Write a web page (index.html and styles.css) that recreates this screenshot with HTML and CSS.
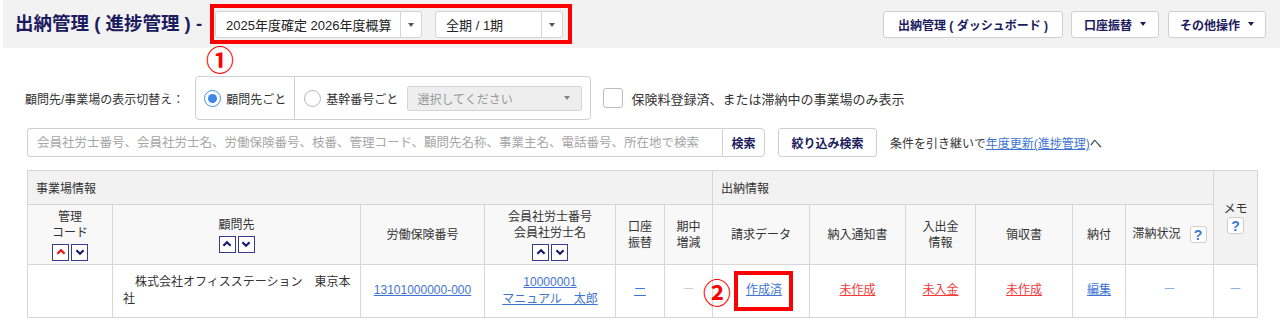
FILE: index.html
```html
<!DOCTYPE html>
<html lang="ja">
<head>
<meta charset="utf-8">
<title>出納管理 ( 進捗管理 )</title>
<link rel="stylesheet" href="styles.css">
</head>
<body>
<header class="topbar">
  <h1 class="page-title">出納管理 ( 進捗管理 ) -</h1>
  <div class="period">
    <div class="dd dd-year"><span class="dd-label">2025年度確定 2026年度概算</span><span class="dd-arrow"><i class="tri"></i></span></div>
    <div class="dd dd-term"><span class="dd-label">全期 / 1期</span><span class="dd-arrow"><i class="tri"></i></span></div>
    <span class="mark mark-1">①</span>
  </div>
  <nav class="actions">
    <button class="btn btn-dash">出納管理 ( ダッシュボード )</button>
    <button class="btn btn-acct">口座振替<i class="tri tri-navy"></i></button>
    <button class="btn btn-other">その他操作<i class="tri tri-navy"></i></button>
  </nav>
</header>

<main class="content">
  <div class="filter-row">
    <span class="filter-label">顧問先/事業場の表示切替え：</span>
    <div class="radio-group">
      <label class="opt opt-a"><span class="radio on"></span>顧問先ごと</label>
      <label class="opt opt-b"><span class="radio"></span>基幹番号ごと<span class="dd-disabled">選択してください<i class="tri tri-gray"></i></span></label>
    </div>
    <label class="check"><span class="box"></span>保険料登録済、または滞納中の事業場のみ表示</label>
  </div>

  <div class="search-row">
    <div class="search">
      <input class="search-input" type="text" placeholder="会員社労士番号、会員社労士名、労働保険番号、枝番、管理コード、顧問先名称、事業主名、電話番号、所在地で検索">
      <button class="search-btn">検索</button>
    </div>
    <button class="btn btn-filter">絞り込み検索</button>
    <p class="carry">条件を引き継いで<a href="#">年度更新(進捗管理)</a>へ</p>
  </div>

  <table class="grid">
    <colgroup>
      <col class="c-code"><col class="c-client"><col class="c-ins"><col class="c-member"><col class="c-acct"><col class="c-mid">
      <col class="c-bill"><col class="c-notice"><col class="c-pay"><col class="c-receipt"><col class="c-deliver"><col class="c-arrears"><col class="c-memo">
    </colgroup>
    <thead>
      <tr class="group-row">
        <th class="group" colspan="6">事業場情報</th>
        <th class="group" colspan="6">出納情報</th>
        <th class="memo-head" rowspan="2">メモ<br><span class="help">?</span></th>
      </tr>
      <tr class="col-row">
        <th>管理<br>コード<br><span class="sort"><span class="sort-btn active"><svg viewBox="0 0 10 10"><polyline points="2,6.5 5,3.5 8,6.5"/></svg></span><span class="sort-btn"><svg viewBox="0 0 10 10"><polyline points="2,3.5 5,6.5 8,3.5"/></svg></span></span></th>
        <th>顧問先<br><span class="sort"><span class="sort-btn"><svg viewBox="0 0 10 10"><polyline points="2,6.5 5,3.5 8,6.5"/></svg></span><span class="sort-btn"><svg viewBox="0 0 10 10"><polyline points="2,3.5 5,6.5 8,3.5"/></svg></span></span></th>
        <th>労働保険番号</th>
        <th>会員社労士番号<br>会員社労士名<br><span class="sort"><span class="sort-btn"><svg viewBox="0 0 10 10"><polyline points="2,6.5 5,3.5 8,6.5"/></svg></span><span class="sort-btn"><svg viewBox="0 0 10 10"><polyline points="2,3.5 5,6.5 8,3.5"/></svg></span></span></th>
        <th>口座<br>振替</th>
        <th>期中<br>増減</th>
        <th>請求データ</th>
        <th>納入通知書</th>
        <th>入出金<br>情報</th>
        <th>領収書</th>
        <th>納付</th>
        <th>滞納状況<span class="help help-inline">?</span></th>
      </tr>
    </thead>
    <tbody>
      <tr class="data-row">
        <td></td>
        <td class="client">　株式会社オフィスステーション　東京本<br>社</td>
        <td><a href="#">13101000000-000</a></td>
        <td><a href="#">10000001</a><br><a href="#">マニュアル　太郎</a></td>
        <td><a href="#">ー</a></td>
        <td><span class="dash-gray">ー</span></td>
        <td><span class="callout"><a href="#">作成済</a><span class="mark mark-2">②</span></span></td>
        <td><a class="warn" href="#">未作成</a></td>
        <td><a class="warn" href="#">未入金</a></td>
        <td><a class="warn" href="#">未作成</a></td>
        <td><a href="#">編集</a></td>
        <td><span class="dash-blue">ー</span></td>
        <td><span class="dash-blue">ー</span></td>
      </tr>
    </tbody>
  </table>
</main>
</body>
</html>
```

FILE: styles.css
```css
* { box-sizing: border-box; }

body {
  margin: 0;
  font-family: "Liberation Sans", "Noto Sans CJK JP", sans-serif;
  font-size: 12px;
  color: #333;
  background: #fff;
}

button {
  font-family: inherit;
  cursor: pointer;
}

/* ---------- top bar ---------- */
.topbar {
  display: flex;
  align-items: center;
  height: 48px;
  margin-left: 3px;
  padding: 0 14px 0 12px;
  background: #f2f2f2;
}

.page-title {
  margin: 0 8px 0 0;
  font-size: 18.5px;
  font-weight: bold;
  color: #1b1b5e;
  white-space: pre;
  line-height: 24px;
}

.period {
  position: relative;
  display: flex;
  gap: 13px;
  padding: 3px 5px 2px 1px;
  border: 4px solid #ff0000;
}

.dd {
  display: flex;
  height: 27px;
  background: #fff;
  border: 1px solid #d4d4d4;
  border-radius: 3px;
  font-size: 13px;
  color: #222;
}

.dd-year { width: 207px; }
.dd-term { width: 128px; }

.dd-label {
  flex: 1;
  display: flex;
  align-items: center;
  padding-left: 10px;
  white-space: nowrap;
}

.dd-arrow {
  width: 21px;
  display: flex;
  align-items: center;
  justify-content: center;
  border-left: 1px solid #d4d4d4;
}

.tri {
  display: inline-block;
  width: 0;
  height: 0;
  border-left: 3.5px solid transparent;
  border-right: 3.5px solid transparent;
  border-top: 4px solid #555;
}

.tri-navy {
  border-top-color: #1b1b5e;
  margin-left: 8px;
}

.tri-gray {
  border-top-color: #888;
}

.mark {
  position: absolute;
  font-family: "Noto Sans CJK JP", sans-serif;
  font-weight: bold;
  font-size: 28px;
  line-height: 28px;
  color: #ff0000;
}

.mark-1 {
  left: -8px;
  top: 37px;
}

.actions {
  display: flex;
  gap: 8px;
  margin-left: auto;
}

.btn {
  display: inline-flex;
  align-items: center;
  justify-content: center;
  height: 27px;
  padding: 0;
  background: #fff;
  border: 1px solid #cfcfcf;
  border-radius: 3px;
  font-size: 12px;
  font-weight: bold;
  color: #1b1b5e;
  white-space: nowrap;
}

.btn-dash { width: 180px; }
.btn-acct { width: 88px; }
.btn-other { width: 98px; margin-left: 1px; }

/* ---------- content ---------- */
.content {
  padding-left: 27px;
}

.filter-row {
  display: flex;
  align-items: center;
  margin: 28px 0 0 -2px;
}

.filter-label {
  margin-right: 11px;
}

.radio-group {
  display: flex;
  align-items: center;
  height: 44px;
  border: 1px solid #d0d0d0;
  border-radius: 4px;
}

.opt {
  display: flex;
  align-items: center;
  height: 100%;
}

.opt-a {
  padding: 0 8px 0 8px;
}

.opt-b {
  padding: 0 8px 0 9px;
  border-left: 1px solid #d0d0d0;
}

.radio {
  position: relative;
  width: 17px;
  height: 17px;
  margin-right: 5px;
  border: 1px solid #b5b5b5;
  border-radius: 50%;
  background: #fff;
}

.radio.on {
  border-color: #4a8ae6;
}

.radio.on::after {
  content: "";
  position: absolute;
  left: 3px;
  top: 3px;
  width: 9px;
  height: 9px;
  border-radius: 50%;
  background: #3f86e8;
}

.dd-disabled {
  display: flex;
  align-items: center;
  justify-content: space-between;
  width: 175px;
  height: 25px;
  margin-left: 9px;
  padding: 0 11px 0 9px;
  background: #eeeeee;
  border: 1px solid #d4d4d4;
  border-radius: 2px;
  color: #999;
}

.check {
  display: flex;
  align-items: center;
  margin-left: 12px;
  font-size: 13px;
}

.box {
  width: 20px;
  height: 20px;
  margin-right: 8px;
  border: 1px solid #bcbcbc;
  border-radius: 3px;
  background: #fff;
}

.search-row {
  display: flex;
  align-items: center;
  margin-top: 8px;
}

.search {
  display: flex;
  height: 29px;
}

.search-input {
  width: 695px;
  height: 100%;
  padding: 0 9px;
  border: 1px solid #d0d0d0;
  border-right: none;
  border-radius: 4px 0 0 4px;
  font-family: inherit;
  font-size: 12.5px;
  color: #333;
  outline: none;
}

.search-input::placeholder {
  color: #a6a6a6;
}

.search-btn {
  width: 43px;
  height: 100%;
  padding: 0;
  background: #fff;
  border: 1px solid #d0d0d0;
  border-radius: 0 4px 4px 0;
  font-size: 12px;
  font-weight: bold;
  color: #1b1b5e;
}

.btn-filter {
  width: 99px;
  height: 29px;
  margin-left: 13px;
}

.carry {
  margin: 0 0 0 13px;
}

a {
  color: #3f74d2;
  text-decoration: underline;
}

/* ---------- table ---------- */
.grid {
  width: 1230px;
  margin-top: 13px;
  border-collapse: collapse;
  table-layout: fixed;
}

.c-code { width: 85px; }
.c-client { width: 248px; }
.c-ins { width: 124px; }
.c-member { width: 131px; }
.c-acct { width: 49px; }
.c-mid { width: 48px; }
.c-bill { width: 97px; }
.c-notice { width: 96px; }
.c-pay { width: 70px; }
.c-receipt { width: 97px; }
.c-deliver { width: 53px; }
.c-arrears { width: 88px; }
.c-memo { width: 44px; }

.grid th,
.grid td {
  border: 1px solid #d6d6d6;
  padding: 0;
  text-align: center;
  vertical-align: middle;
  font-weight: normal;
}

.group-row { height: 34px; }
.col-row { height: 60px; }
.data-row { height: 53px; }

.grid th.group {
  padding-left: 8px;
  text-align: left;
  background: #f2f2f2;
}

.grid th.memo-head {
  background: #f2f2f2;
  line-height: 16px;
}

.col-row th {
  background: #f8f8f8;
  line-height: 16px;
}

.sort {
  display: inline-flex;
  gap: 2px;
  margin-top: 3px;
  vertical-align: top;
}

.sort-btn {
  display: inline-flex;
  align-items: center;
  justify-content: center;
  width: 17px;
  height: 17px;
  background: #fff;
  border: 1.5px solid #3a3a8e;
}

.sort-btn svg {
  width: 12px;
  height: 12px;
  fill: none;
  stroke: #1b1b6a;
  stroke-width: 1.8;
}

.sort-btn.active svg {
  stroke: #ee1111;
}

.help {
  display: inline-flex;
  align-items: center;
  justify-content: center;
  width: 17px;
  height: 17px;
  background: #fff;
  border: 1px solid #cfcfcf;
  border-radius: 3px;
  color: #3a7bd8;
  font-size: 14px;
  font-weight: bold;
  line-height: 1;
  vertical-align: middle;
}

.help-inline {
  margin-left: 9px;
}

.data-row td {
  line-height: 17.5px;
}

.grid td.client {
  padding: 0 0 0 10px;
  text-align: left;
  white-space: nowrap;
}

.warn {
  color: #f23a3a;
}

.dash-gray {
  color: #cfcfcf;
}

.dash-blue {
  color: #8db0ea;
}

.callout {
  position: relative;
  display: inline-block;
  margin-left: 5px;
  padding: 7px 7px 7px 8px;
  border: 4px solid #ff0000;
}

.mark-2 {
  left: -35px;
  top: 3px;
}
```
